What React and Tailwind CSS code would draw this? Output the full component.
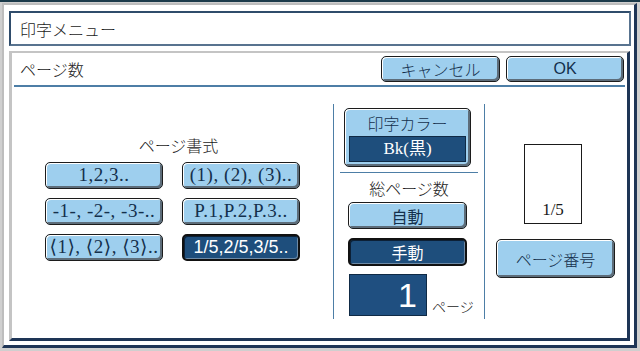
import React from 'react';

const jp = '"Noto Sans CJK JP", "Liberation Sans", sans-serif';
const serif = '"Liberation Serif", "DejaVu Serif", "Noto Sans CJK JP", serif';

const LightButton = ({ children, className = '', font = jp, textClass = 'text-[16px]' }) => (
  <div
    className={`flex items-center justify-center whitespace-nowrap rounded-[5px] border border-[#1c1c1c] bg-[#9ecfee] text-[#14304c] shadow-[inset_1px_1px_0_#ffffff,inset_-2px_-2px_0_#5d6d7a] ${textClass} ${className}`}
    style={{ fontFamily: font }}
  >
    {children}
  </div>
);

const DarkButton = ({ children, className = '', font = jp, textClass = 'text-[16px]' }) => (
  <div
    className={`flex items-center justify-center whitespace-nowrap rounded-[5px] border-2 border-[#111] bg-[#1e4e7c] text-white shadow-[inset_1px_1px_0_#0c2036,inset_-1px_-1px_0_#6d8aa6] ${textClass} ${className}`}
    style={{ fontFamily: font }}
  >
    {children}
  </div>
);

const formats = ['1,2,3..', '(1), (2), (3)..', '-1-, -2-, -3-..', 'P.1,P.2,P.3..', '⟨1⟩, ⟨2⟩, ⟨3⟩..'];

export default function App() {
  return (
    <div className="w-[640px] h-[351px] overflow-hidden bg-[#cfcfcf] border-t-2 border-[#1b3a4a]">
      <div className="ml-[2px] mt-[1px] w-[635px] h-[345px] bg-white border-l-2 border-t-2 border-l-[#bdbdbd] border-t-[#bdbdbd] border-r-[3px] border-b-[3px] border-r-[#1e3556] border-b-[#1e3556] pl-[5px] pt-[6px]">
        {/* title */}
        <div
          className="w-[622px] h-[35px] border-2 border-[#2f4c6b] border-b-[#58738f] border-r-[#58738f] flex items-center pl-[9px] text-[16px] text-[#1a1a1a] font-light"
          style={{ fontFamily: jp }}
        >
          印字メニュー
        </div>

        {/* panel */}
        <div className="mt-[5px] w-[621px] h-[290px] border-l-[3px] border-t-2 border-l-[#c4c4c4] border-t-[#c4c4c4] border-r-[3px] border-b-[3px] border-r-[#1e3556] border-b-[#1e3556] flex flex-col">
          <div className="h-[32px] flex items-center pl-[8px] pr-[3px]">
            <span className="text-[16px] text-[#1a1a1a] font-light" style={{ fontFamily: jp }}>
              ページ数
            </span>
            <div className="ml-auto flex gap-[6px]">
              <LightButton className="w-[119px] h-[26px] font-light">キャンセル</LightButton>
              <LightButton className="w-[118px] h-[26px]" font='"Liberation Sans", sans-serif'>
                OK
              </LightButton>
            </div>
          </div>
          <div className="mx-[2px] h-[2px] bg-[#4d7ea6]" />

          <div className="flex flex-1">
            {/* left */}
            <div className="w-[321px] pt-[48px]">
              <div className="h-[20px] leading-[20px] text-center pl-[12px] text-[16px] text-[#1a1a1a] font-light" style={{ fontFamily: jp }}>
                ページ書式
              </div>
              <div className="mt-[7px] ml-[33px] grid grid-cols-[118px_118px] gap-x-[19px] gap-y-[9px]">
                {formats.map((f) => (
                  <LightButton key={f} className="h-[27px]" font={serif} textClass="text-[19px] tracking-[0.5px]">
                    {f}
                  </LightButton>
                ))}
                <DarkButton className="h-[27px]" font='"Liberation Sans", sans-serif' textClass="text-[18px]">
                  1/5,2/5,3/5..
                </DarkButton>
              </div>
            </div>

            <div className="mt-[17px] h-[215px] w-px bg-[#4d7ea6]" />

            {/* middle */}
            <div className="w-[150px] flex flex-col">
              <div className="mt-[21px] ml-[10px] w-[127px] h-[59px] rounded-[5px] border border-[#1c1c1c] bg-[#9ecfee] shadow-[inset_1px_1px_0_#ffffff,inset_-2px_-2px_0_#5d6d7a] flex flex-col items-center">
                <div className="h-[27px] flex items-center text-[16px] text-[#14304c] font-light" style={{ fontFamily: jp }}>
                  印字カラー
                </div>
                <div className="w-[117px] h-[26px] bg-[#1e4e7c] border border-[#0f2a45] flex items-center justify-center text-white text-[17px]" style={{ fontFamily: serif }}>
                  Bk(黒)
                </div>
              </div>
              <div className="mt-[5px] mx-[6px] h-px bg-[#4d7ea6]" />
              <div className="mt-[5px] h-[20px] leading-[20px] text-center text-[16px] text-[#1a1a1a] font-light" style={{ fontFamily: jp }}>
                総ページ数
              </div>
              <LightButton className="mt-[4px] ml-[14px] w-[119px] h-[27px]">自動</LightButton>
              <DarkButton className="mt-[9px] ml-[14px] w-[119px] h-[28px]">手動</DarkButton>
              <div className="mt-[8px] ml-[15px] flex items-end">
                <div
                  className="w-[78px] h-[42px] bg-[#1f4f80] border border-[#0f2a45] flex items-center justify-end pr-[9px] text-white text-[34px]"
                  style={{ fontFamily: '"Liberation Sans", sans-serif' }}
                >
                  1
                </div>
                <span className="ml-[5px] mb-[1px] text-[14px] leading-[18px] text-[#1a1a1a] font-light" style={{ fontFamily: jp }}>
                  ページ
                </span>
              </div>
            </div>

            <div className="mt-[17px] h-[215px] w-px bg-[#4d7ea6]" />

            {/* right */}
            <div className="flex flex-col">
              <div className="mt-[57px] ml-[39px] w-[58px] h-[80px] border border-[#1a1a1a] flex items-end justify-center pb-[1px] text-[17px] text-[#1a1a1a]" style={{ fontFamily: serif }}>
                1/5
              </div>
              <LightButton className="mt-[15px] ml-[11px] w-[119px] h-[39px] font-light">ページ番号</LightButton>
            </div>
          </div>
        </div>
      </div>
    </div>
  );
}
